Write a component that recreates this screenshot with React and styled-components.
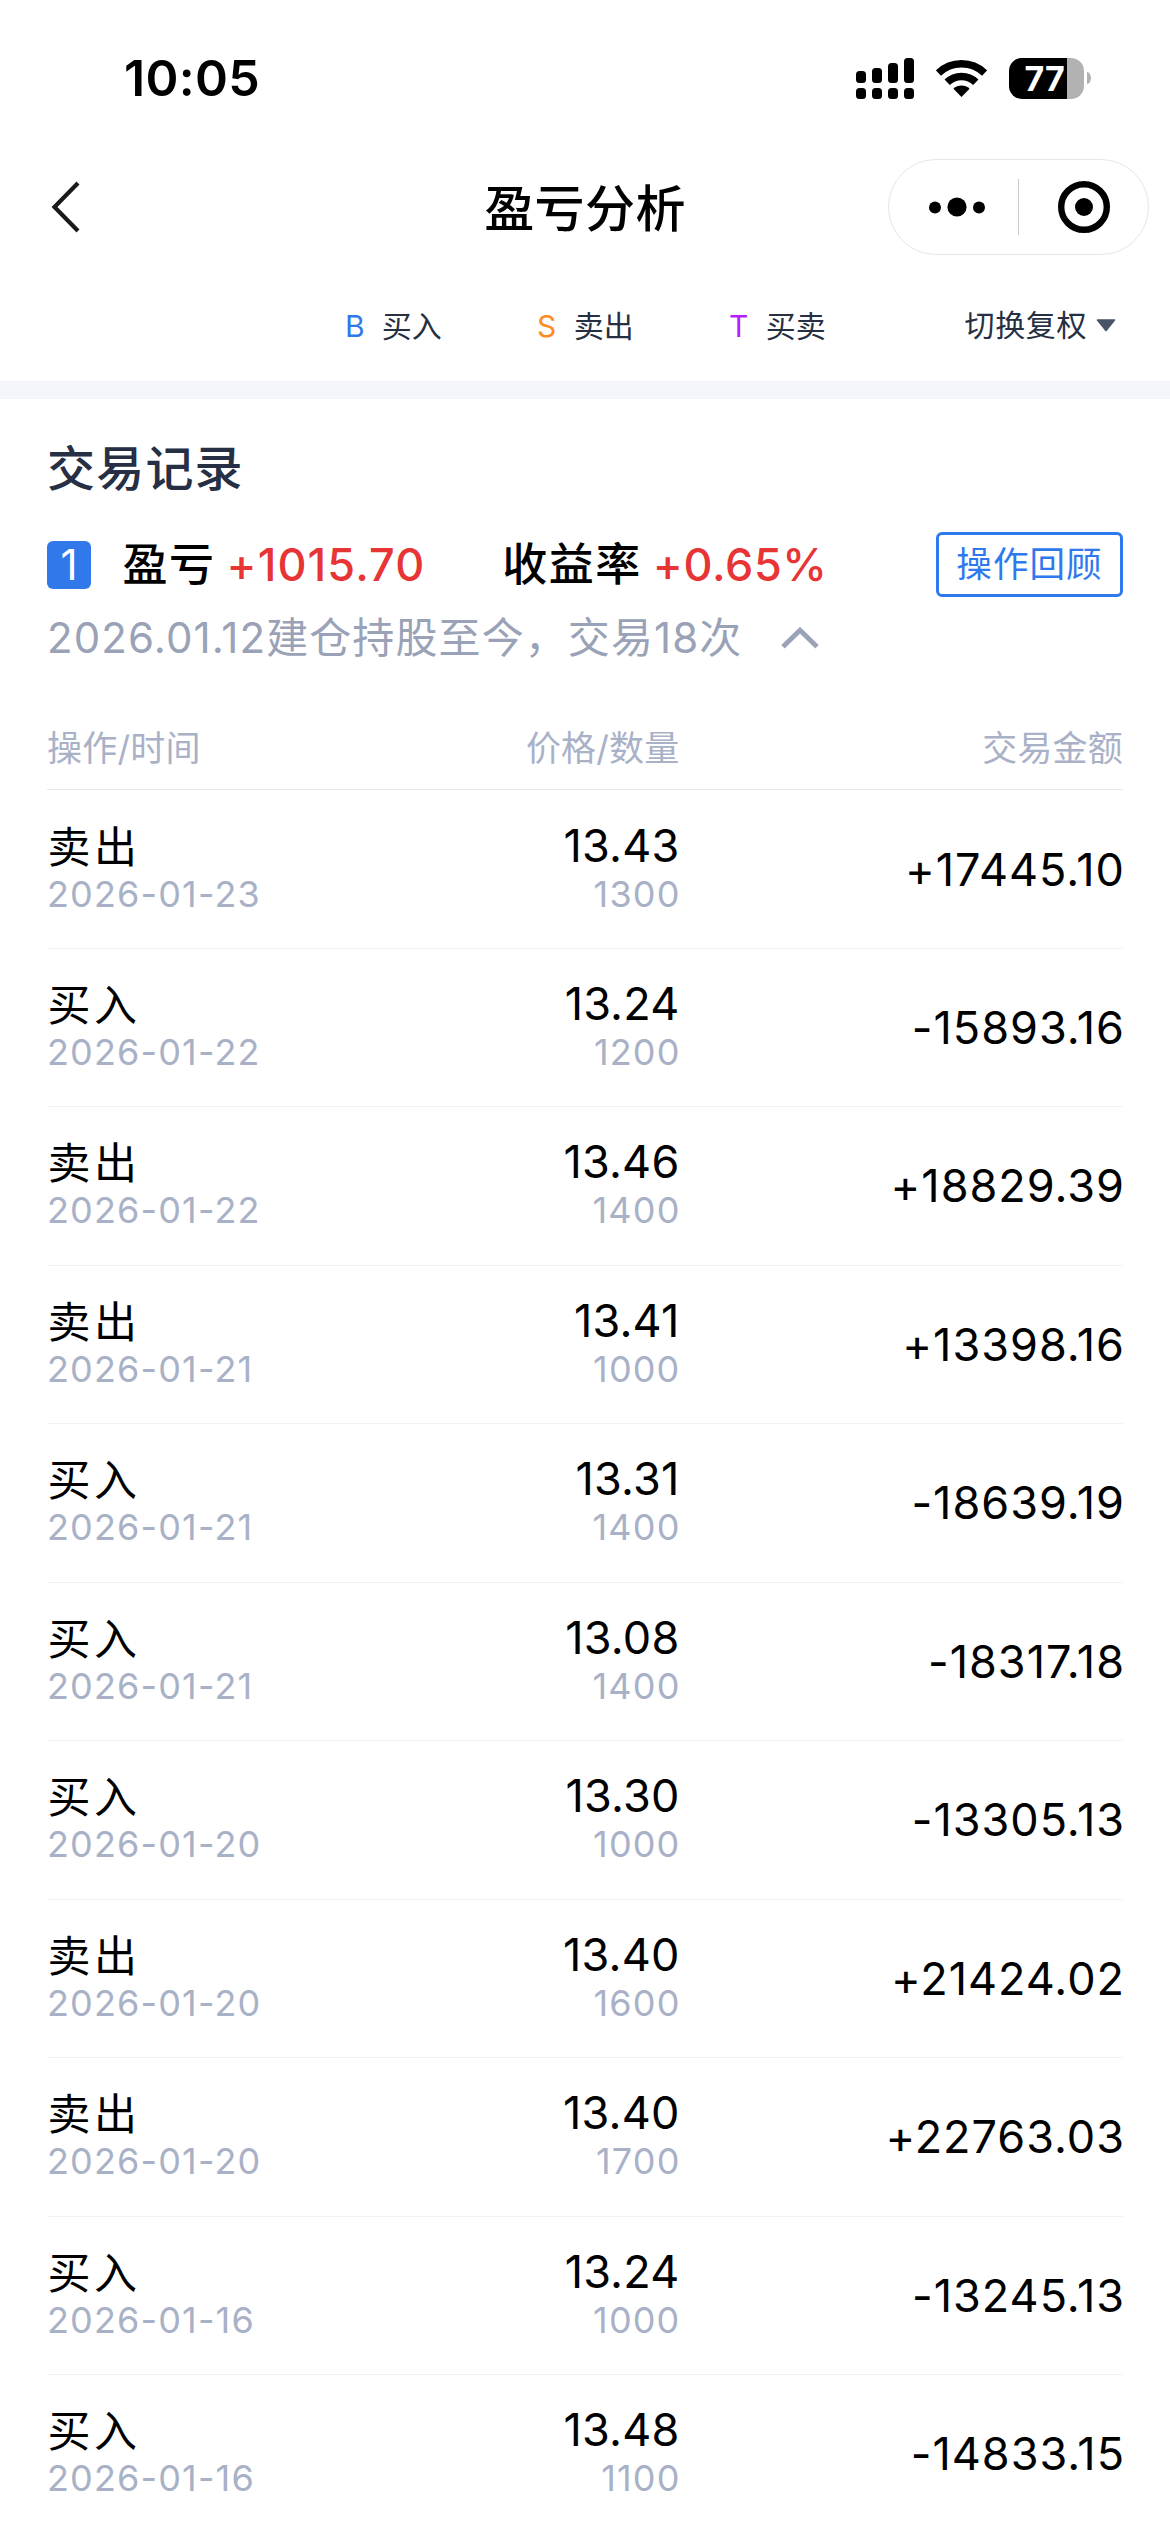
import React from "react";
import styled, { createGlobalStyle } from "styled-components";

const GlobalStyle = createGlobalStyle`
  * { box-sizing: border-box; }
  body {
    margin: 0;
    background: #fff;
    color: #000;
    font-family: Inter, "Noto Sans CJK SC", sans-serif;
    overflow: hidden;
  }
  svg { display: block; flex: none; }
`;

const Page = styled.main`
  width: 1170px;
  height: 2532px;
  overflow: hidden;
  background: #fff;
  white-space: nowrap;
`;

/* ---------- status bar ---------- */

const StatusBar = styled.header`
  height: 156px;
  padding: 0 79px 0 124px;
  display: flex;
  align-items: center;
  justify-content: space-between;
`;

const Clock = styled.time`
  font-size: 50px;
  font-weight: 600;
  letter-spacing: 0.3px;
  line-height: 60px;
`;

const StatusIcons = styled.div`
  display: flex;
  align-items: center;
  gap: 22px;
`;

const Battery = styled.div`
  display: flex;
  align-items: center;
  gap: 3px;
`;

const BatteryBody = styled.div`
  width: 75px;
  height: 41px;
  padding-left: 15.5px;
  border-radius: 13px;
  background: linear-gradient(to right, #000 58px, #b2b2b2 58px);
  color: #fff;
  font-size: 34px;
  font-weight: 700;
  line-height: 41px;
`;

const BatteryCap = styled.div`
  width: 4px;
  height: 12px;
  border-radius: 0 4px 4px 0 / 0 6px 6px 0;
  background: #b2b2b2;
`;

/* ---------- navigation bar ---------- */

const NavBar = styled.nav`
  height: 102px;
  padding: 0 21px 0 50px;
  display: grid;
  grid-template-columns: 261px 1fr 261px;
  align-items: center;
`;

const BackButton = styled.button`
  padding: 0;
  border: 0;
  background: none;
  justify-self: start;
`;

const Title = styled.h1`
  margin: 0;
  padding: 3px 29px 0 0;
  text-align: center;
  font-size: 50px;
  font-weight: 500;
  letter-spacing: 0.4px;
  line-height: 66px;
`;

const Capsule = styled.div`
  width: 261px;
  height: 96px;
  padding-left: 7px;
  border: 1px solid #e6e6e6;
  border-radius: 48px;
  display: grid;
  grid-template-columns: 122px 1px 1fr;
  align-items: center;
  svg { justify-self: center; }
`;

const CapsuleDivider = styled.div`
  height: 56px;
  background: #cbcbcb;
`;

/* ---------- legend ---------- */

const LegendBar = styled.div`
  height: 123px;
  padding: 13px 54px 0 345px;
  display: flex;
  align-items: center;
  justify-content: space-between;
  color: #272f43;
  font-size: 30px;
  line-height: 40px;
`;

const Legend = styled.div`
  display: flex;
  gap: 95.2px;
`;

const LegendItem = styled.div`
  display: flex;
`;

const LegendMark = styled.span`
  width: 36.8px;
  color: ${(p) => p.$color};
`;

const AdjustSelect = styled.div`
  display: flex;
  align-items: center;
  gap: 9px;
  margin-top: -2px;
  letter-spacing: 0.6px;
`;

const Band = styled.div`
  height: 18px;
  background: #f4f5fa;
`;

/* ---------- records ---------- */

const Records = styled.section`
  padding: 0 47px;
`;

const SectionTitle = styled.h2`
  margin: 0;
  padding-top: 39px;
  height: 133px;
  color: #262f43;
  font-size: 48px;
  font-weight: 500;
  letter-spacing: 1.2px;
  line-height: 62px;
`;

const Summary = styled.div`
  height: 65px;
  display: flex;
  align-items: center;
`;

const Index = styled.span`
  width: 44px;
  height: 48px;
  margin-right: 31.5px;
  border-radius: 6px;
  background: #3178ea;
  color: #fff;
  font-size: 42px;
  line-height: 48px;
  text-align: center;
`;

const Metric = styled.div`
  display: flex;
  gap: 11px;
  margin-right: 77px;
  font-size: 45px;
  font-weight: 500;
  line-height: 60px;
`;

const MetricLabel = styled.span`
  letter-spacing: 1.5px;
`;

const MetricValue = styled.span`
  color: #e73535;
  letter-spacing: ${(p) => p.$spacing}px;
`;

const ReviewButton = styled.button`
  width: 187px;
  height: 65px;
  margin-left: auto;
  padding: 0;
  border: 3px solid #2f79ee;
  border-radius: 6px;
  background: #fff;
  color: #2f79ee;
  font-family: inherit;
  font-size: 35.5px;
  letter-spacing: 1.1px;
  line-height: 58px;
`;

const Period = styled.div`
  height: 81px;
  display: flex;
  align-items: center;
  gap: 39px;
  color: #99a2b6;
  font-size: 42px;
  letter-spacing: 1.1px;
  line-height: 60px;
`;

/* ---------- table ---------- */

const TableHead = styled.div`
  height: 112px;
  margin-bottom: 0.5px;
  padding-top: 28px;
  display: grid;
  grid-template-columns: 316px 316.5px 1fr;
  align-items: center;
  border-bottom: 1px solid #e8e8e8;
  color: #a9b1c7;
  font-size: 35px;
  letter-spacing: 0.2px;
  line-height: 50px;
`;

const HeadCell = styled.span`
  text-align: ${(p) => p.$align || "left"};
`;

const Row = styled.div`
  height: 158.46px;
  padding-top: 28px;
  display: grid;
  grid-template-columns: 316px 316.5px 1fr;
  align-items: start;
  border-bottom: 1px solid #f2f2f2;
`;

const Cell = styled.div`
  display: flex;
  flex-direction: column;
  align-items: ${(p) => p.$align || "flex-start"};
`;

const Operation = styled.span`
  padding-left: 0.5px;
  font-size: 43px;
  letter-spacing: 3.4px;
  line-height: 56px;
`;

const Price = styled.span`
  font-size: 45px;
  letter-spacing: 0.2px;
  line-height: 54px;
`;

const Muted = styled.span`
  margin-top: ${(p) => p.$lift || 0}px;
  margin-right: -1px;
  color: #a9b1c7;
  font-size: 36px;
  letter-spacing: 1.15px;
  line-height: 43px;
`;

const Amount = styled.span`
  margin-right: -2px;
  padding-top: 24px;
  text-align: right;
  font-size: 45px;
  letter-spacing: 1px;
  line-height: 54px;
`;

/* ---------- icons ---------- */

const SignalIcon = () => (
  <svg width="58" height="41" viewBox="0 0 58 41">
    {[13, 10, 5, 0].map((top, i) => (
      <g key={top}>
        <rect x={i * 16} y={top} width="10" height={25 - top} rx="3.5" />
        <rect x={i * 16} y="30" width="10" height="11" rx="3.5" />
      </g>
    ))}
  </svg>
);

const WifiIcon = () => (
  <svg width="51" height="37" viewBox="0 0 51 37">
    <g fill="none" stroke="#000">
      <path d="M2.4 13.1A33.3 33.3 0 0 1 48.6 13.1" strokeWidth="7.4" />
      <path d="M11.2 22.3A20.5 20.5 0 0 1 39.8 22.3" strokeWidth="7.6" />
    </g>
    <path d="M25.5 37L17.4 28.8A11.6 11.6 0 0 1 33.6 28.8Z" />
  </svg>
);

const BackIcon = () => (
  <svg width="32" height="52" viewBox="0 0 32 52">
    <path d="M28 2L4.5 26L28 50" fill="none" stroke="#1a1a1a" strokeWidth="4.2" />
  </svg>
);

const MoreIcon = () => (
  <svg width="58" height="20" viewBox="0 0 58 20">
    <circle cx="7" cy="10.5" r="6" />
    <circle cx="29" cy="10" r="9.6" />
    <circle cx="51" cy="10.5" r="6" />
  </svg>
);

const TargetIcon = () => (
  <svg width="52" height="52" viewBox="0 0 52 52">
    <circle cx="26" cy="26" r="22.8" fill="none" stroke="#000" strokeWidth="6.4" />
    <circle cx="26" cy="26" r="9" />
  </svg>
);

const CaretIcon = () => (
  <svg width="20" height="13" viewBox="0 0 20 13">
    <path d="M1.5 1H18.5L10 11.5Z" fill="#485468" stroke="#485468" strokeWidth="1.6" strokeLinejoin="round" />
  </svg>
);

const CollapseIcon = () => (
  <svg width="38" height="22" viewBox="0 0 38 22">
    <path d="M2 19.8L19 3.2L36 19.8" fill="none" stroke="#99a2b6" strokeWidth="4.8" />
  </svg>
);

/* ---------- data ---------- */

const legend = [
  ["B", "买入", "#2f78ec"],
  ["S", "卖出", "#ff8a1f"],
  ["T", "买卖", "#b51fff"],
];

const trades = [
  ["卖出", "2026-01-23", "13.43", "1300", "+17445.10"],
  ["买入", "2026-01-22", "13.24", "1200", "-15893.16"],
  ["卖出", "2026-01-22", "13.46", "1400", "+18829.39"],
  ["卖出", "2026-01-21", "13.41", "1000", "+13398.16"],
  ["买入", "2026-01-21", "13.31", "1400", "-18639.19"],
  ["买入", "2026-01-21", "13.08", "1400", "-18317.18"],
  ["买入", "2026-01-20", "13.30", "1000", "-13305.13"],
  ["卖出", "2026-01-20", "13.40", "1600", "+21424.02"],
  ["卖出", "2026-01-20", "13.40", "1700", "+22763.03"],
  ["买入", "2026-01-16", "13.24", "1000", "-13245.13"],
  ["买入", "2026-01-16", "13.48", "1100", "-14833.15"],
];

export default function App() {
  return (
    <>
      <GlobalStyle />
      <Page>
        <StatusBar>
          <Clock>10:05</Clock>
          <StatusIcons>
            <SignalIcon />
            <WifiIcon />
            <Battery>
              <BatteryBody>77</BatteryBody>
              <BatteryCap />
            </Battery>
          </StatusIcons>
        </StatusBar>

        <NavBar>
          <BackButton aria-label="返回">
            <BackIcon />
          </BackButton>
          <Title>盈亏分析</Title>
          <Capsule>
            <MoreIcon />
            <CapsuleDivider />
            <TargetIcon />
          </Capsule>
        </NavBar>

        <LegendBar>
          <Legend>
            {legend.map(([mark, label, color]) => (
              <LegendItem key={mark}>
                <LegendMark $color={color}>{mark}</LegendMark>
                <span>{label}</span>
              </LegendItem>
            ))}
          </Legend>
          <AdjustSelect>
            <span>切换复权</span>
            <CaretIcon />
          </AdjustSelect>
        </LegendBar>
        <Band />

        <Records>
          <SectionTitle>交易记录</SectionTitle>
          <Summary>
            <Index>1</Index>
            <Metric>
              <MetricLabel>盈亏</MetricLabel>
              <MetricValue $spacing={1.1}>+1015.70</MetricValue>
            </Metric>
            <Metric>
              <MetricLabel>收益率</MetricLabel>
              <MetricValue $spacing={0.6}>+0.65%</MetricValue>
            </Metric>
            <ReviewButton>操作回顾</ReviewButton>
          </Summary>
          <Period>
            <span>2026.01.12建仓持股至今，交易18次</span>
            <CollapseIcon />
          </Period>

          <TableHead>
            <HeadCell>操作/时间</HeadCell>
            <HeadCell $align="right">价格/数量</HeadCell>
            <HeadCell $align="right">交易金额</HeadCell>
          </TableHead>
          {trades.map(([operation, date, price, quantity, amount], i) => (
            <Row key={i}>
              <Cell>
                <Operation>{operation}</Operation>
                <Muted $lift={-2}>{date}</Muted>
              </Cell>
              <Cell $align="flex-end">
                <Price>{price}</Price>
                <Muted>{quantity}</Muted>
              </Cell>
              <Amount>{amount}</Amount>
            </Row>
          ))}
        </Records>
      </Page>
    </>
  );
}
